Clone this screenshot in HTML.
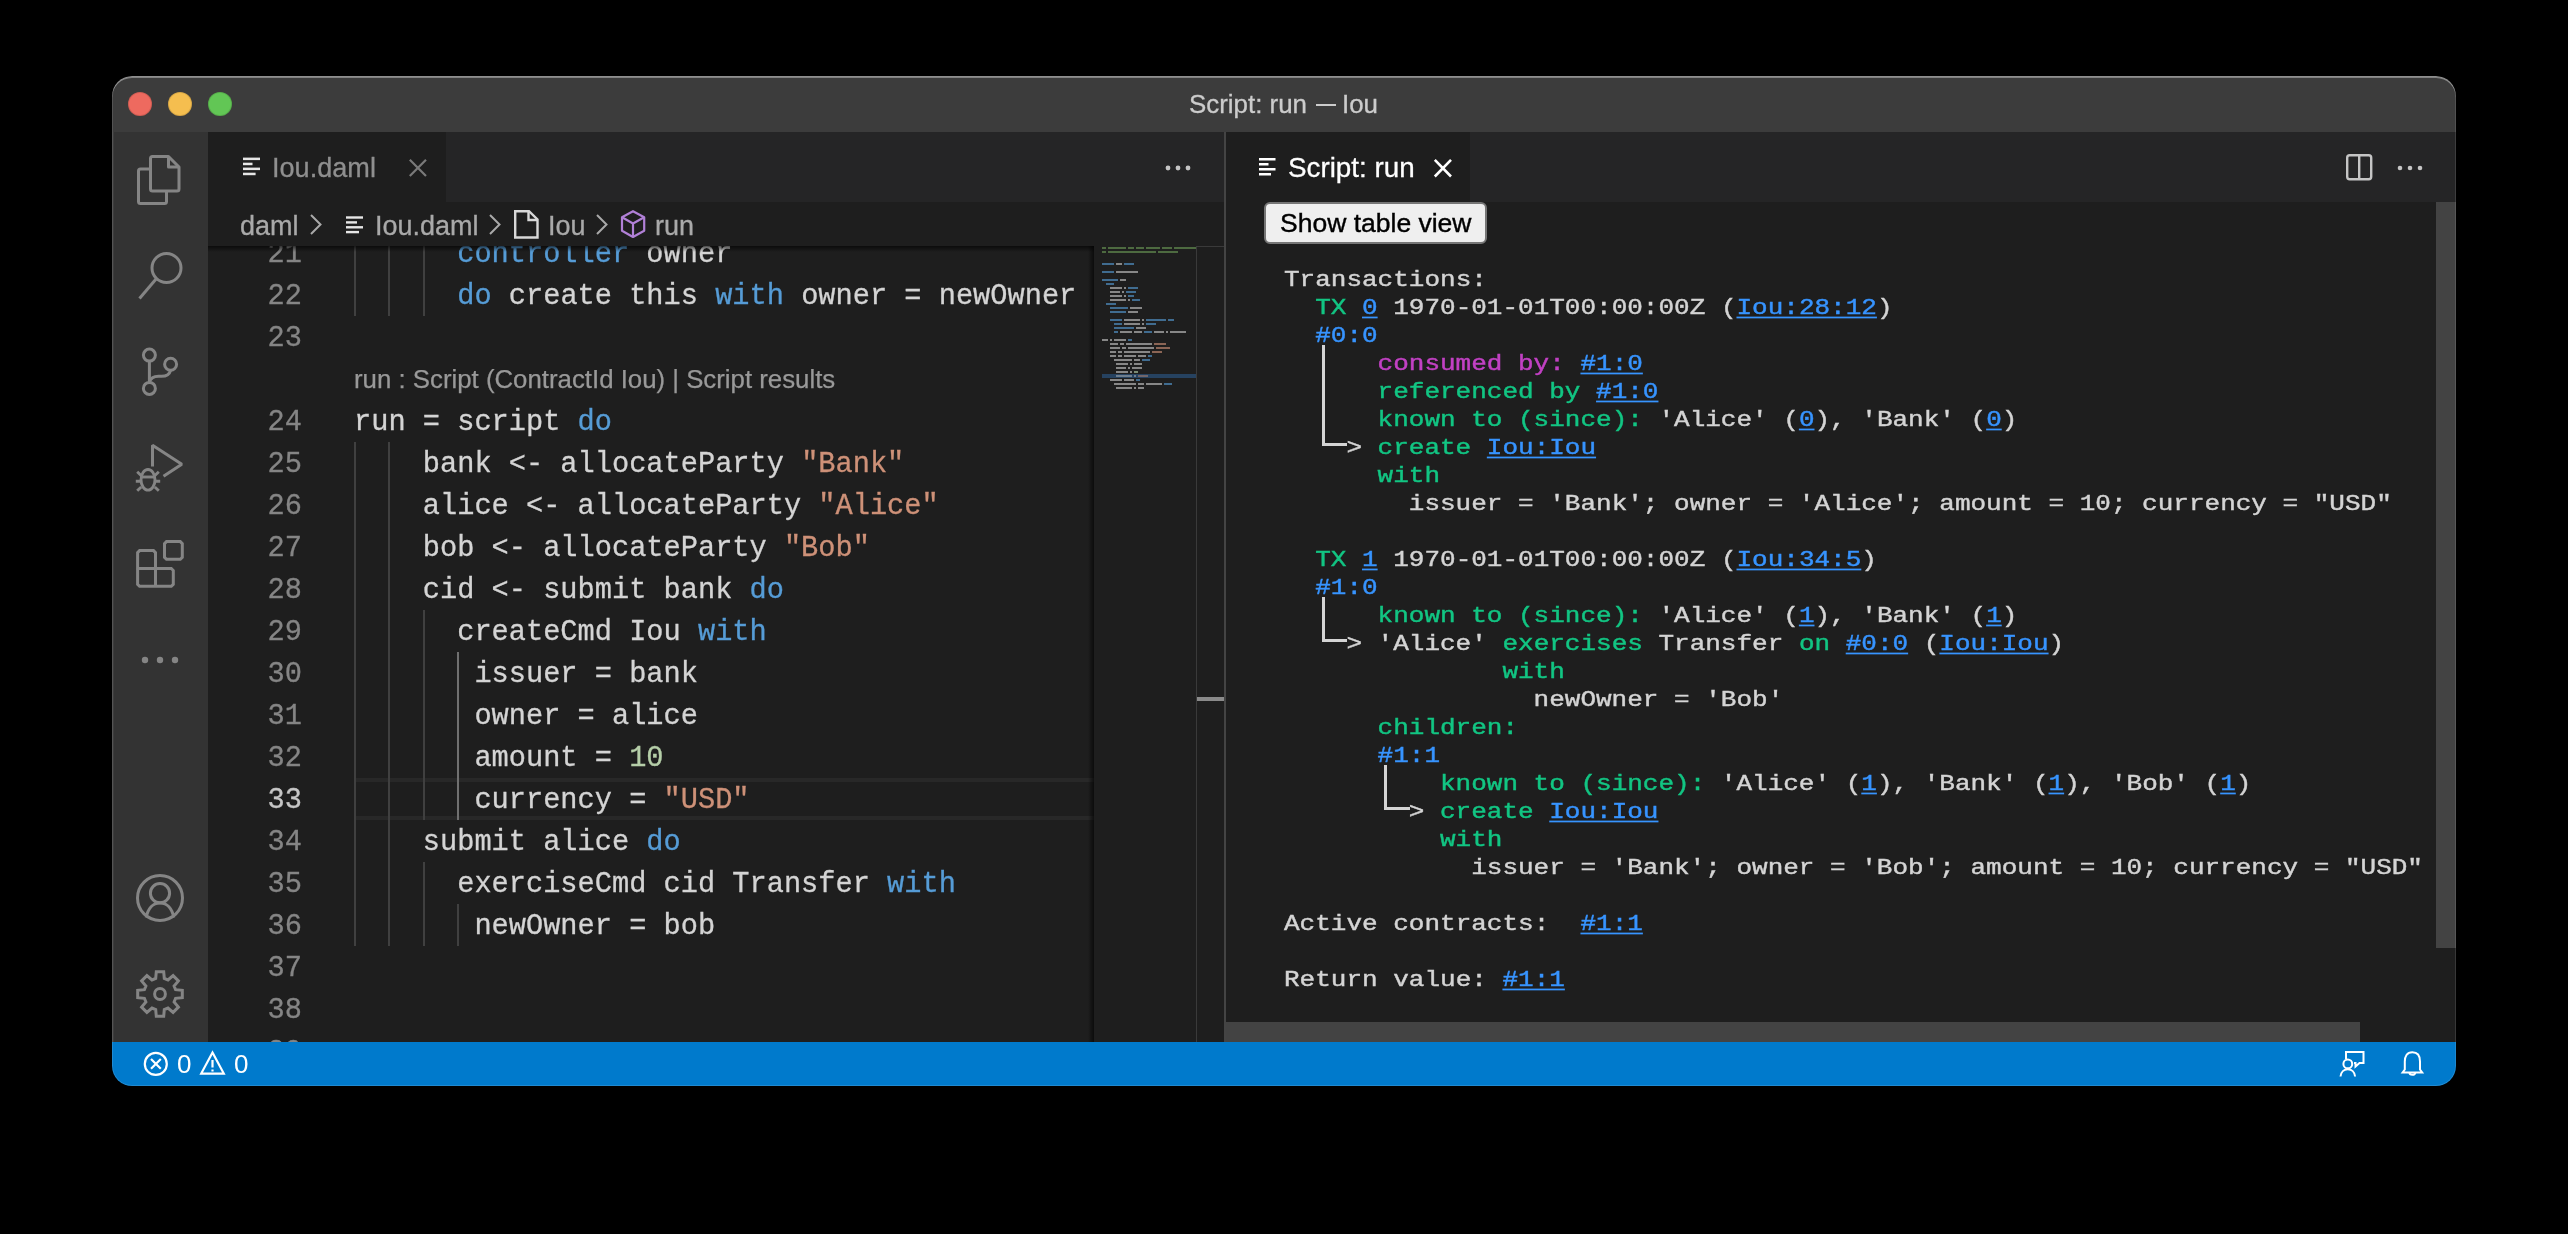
<!DOCTYPE html>
<html><head><meta charset="utf-8">
<style>
*{box-sizing:border-box;margin:0;padding:0}
html,body{width:2568px;height:1234px;background:#000;overflow:hidden}
body{position:relative;font-family:"Liberation Sans",sans-serif}
.win{position:absolute;left:0;top:0;width:2568px;height:1234px;will-change:transform;clip-path:inset(76px 112px 148px 112px round 20px);background:#1e1e1e}
.a{position:absolute}
svg{position:absolute;overflow:visible}
.title{left:112px;top:76px;width:2344px;height:56px;background:#3c3c3c}
.tl{position:absolute;width:24px;height:24px;border-radius:50%;top:92px;box-shadow:inset 0 0 0 1px rgba(0,0,0,0.12)}
.ttext{left:112px;width:2344px;top:76px;height:56px;line-height:56px;text-align:center;color:#cccccc;font-size:25.2px;-webkit-text-stroke:0.3px currentColor}
.act{left:112px;top:132px;width:96px;height:910px;background:#333333}
.tabs{top:132px;height:70px;background:#252526}
.status{left:112px;top:1042px;width:2344px;height:44px;background:#007acc}
.code{font-family:"Liberation Mono",monospace;font-size:28.66px;line-height:42px;white-space:pre;color:#d4d4d4;-webkit-text-stroke:0.3px currentColor;transform:scaleY(1.05);transform-origin:0 28.6px}
.ln{font-family:"Liberation Mono",monospace;font-size:28.66px;line-height:42px;white-space:pre;color:#858585;text-align:right;width:100px;-webkit-text-stroke:0.3px currentColor;transform:scaleY(1.05);transform-origin:0 28.6px}
.k{color:#569cd6}.s{color:#ce9178}.n{color:#b5cea8}
.g{position:absolute;width:2px;background:#404040}
.res{font-family:"Liberation Mono",monospace;font-size:26px;line-height:28px;white-space:pre;color:#d4d4d4;-webkit-text-stroke:0.5px currentColor;transform:scaleY(0.87);transform-origin:0 21px}
.gr{color:#12c583}.bl{color:#3794ff}.mg{color:#c241c4}
.lk{color:#3794ff;text-decoration:underline;text-underline-offset:3px}
.lens{font-size:25.8px;line-height:42px;color:#999999;white-space:pre;-webkit-text-stroke:0.25px currentColor}
.cur{color:#c6c6c6}
.bc{top:204px;height:44px;line-height:44px;font-size:27px;color:#a9a9a9;white-space:pre;-webkit-text-stroke:0.3px currentColor}
.mm{font-family:"Liberation Mono",monospace;font-size:3.34px;line-height:4px;white-space:pre;color:#bbbbbb}
</style></head><body>
<div class="win">
  <div class="a title"></div>
  <div class="a ttext" style="left:1189px;width:auto;text-align:left;font-size:25.9px">Script: run</div>
  <div class="a" style="left:1316px;top:104px;width:20px;height:2.4px;background:#cccccc"></div>
  <div class="a ttext" style="left:1342px;width:auto;text-align:left;font-size:25.9px">Iou</div>
  <div class="tl" style="left:128px;background:#ee6a5f"></div>
  <div class="tl" style="left:168px;background:#f5be4f"></div>
  <div class="tl" style="left:208px;background:#62c655"></div>

  <!-- activity bar -->
  <div class="a act"></div>
  <div class="a" style="left:112px;top:132px;width:2px;height:910px;background:#3d3d3d"></div>
  <svg style="left:112px;top:132px" width="96" height="910" viewBox="0 0 96 910" fill="none" stroke="#858585" stroke-width="3">
    <!-- explorer -->
    <g stroke-linejoin="round">
      <path d="M40.5 24.5 H56.5 L67 35 V57 a2 2 0 0 1-2 2 H40.5 a2 2 0 0 1-2-2 V26.5 a2 2 0 0 1 2-2 Z"/>
      <path d="M56.5 24.5 V35 H67"/>
      <path d="M38.5 37 H28.5 a2 2 0 0 0-2 2 V69.5 a2 2 0 0 0 2 2 H52.5 a2 2 0 0 0 2-2 V59"/>
    </g>
    <!-- search -->
    <circle cx="54.5" cy="136" r="14.5"/>
    <path d="M44.5 146.5 L27.5 166.5" stroke-linecap="butt"/>
    <!-- scm -->
    <circle cx="37.4" cy="223.1" r="6"/>
    <circle cx="58.6" cy="232.3" r="6"/>
    <circle cx="37.4" cy="256.4" r="6"/>
    <path d="M37.4 229 V250.5"/>
    <path d="M58.6 238.3 C57.5 242.5 54.5 244.3 49.5 244.3 H46.5 C41.5 244.3 38.5 246.5 37.4 250.5"/>
    <!-- run & debug -->
    <path d="M40.5 334.5 V313.2 L69.8 332.2 L51.5 344.2" stroke-linejoin="bevel"/>
    <g stroke-width="2.9">
      <ellipse cx="36" cy="347.8" rx="7" ry="10.3"/>
      <path d="M29 345 H43"/>
      <path d="M23.8 349.2 H29 M43 349.2 H48.2"/>
      <path d="M25.2 339.8 L29.6 344 M46.8 339.8 L42.4 344"/>
      <path d="M25.2 358.8 L29.2 355 M46.8 358.8 L42.8 355"/>
    </g>
    <!-- extensions -->
    <g stroke-linejoin="miter">
      <path d="M27.6 418.6 H41.5 L43.5 420.6 V436.5 H59.3 L61.3 438.5 V452.3 L59.3 454.3 H27.6 L25.6 452.3 V420.6 Z"/>
      <path d="M25.6 436.5 H43.5 V454.3"/>
      <path d="M54.5 409.6 H68.3 L70.3 411.6 V425.3 L68.3 427.3 H54.5 L52.5 425.3 V411.6 Z"/>
    </g>
    <!-- more -->
    <g fill="#858585" stroke="none">
      <circle cx="33" cy="528" r="3.2"/><circle cx="48" cy="528" r="3.2"/><circle cx="63" cy="528" r="3.2"/>
    </g>
    <!-- accounts -->
    <circle cx="48" cy="766" r="22.5"/>
    <circle cx="48" cy="761.2" r="9.6"/>
    <path d="M34.2 785.5 C36 776.5 41 771 48 771 C55 771 60 776.5 61.8 785.5"/>
    <!-- gear -->
    <path stroke-linejoin="miter" d="M43.7 846.4 L44.3 839.7 L51.7 839.7 L52.3 846.4 L56.0 847.9 L61.1 843.6 L66.4 848.9 L62.1 854.0 L63.6 857.7 L70.3 858.3 L70.3 865.7 L63.6 866.3 L62.1 870.0 L66.4 875.1 L61.1 880.4 L56.0 876.1 L52.3 877.6 L51.7 884.3 L44.3 884.3 L43.7 877.6 L40.0 876.1 L34.9 880.4 L29.6 875.1 L33.9 870.0 L32.4 866.3 L25.7 865.7 L25.7 858.3 L32.4 857.7 L33.9 854.0 L29.6 848.9 L34.9 843.6 L40.0 847.9 Z"/>
    <circle cx="48" cy="862" r="5.4"/>
  </svg>

  <!-- left group tabs -->
  <div class="a tabs" style="left:208px;width:1016px"></div>
  <div class="a" style="left:208px;top:132px;width:238px;height:70px;background:#1e1e1e"></div>
  <svg style="left:243px;top:157px" width="18" height="19" fill="#e6e6e6">
    <rect x="0" y="0.6" width="17" height="2.5"/><rect x="0" y="5.7" width="9.5" height="2.5"/>
    <rect x="0" y="10.6" width="17" height="2.5"/><rect x="0" y="15.7" width="12.6" height="2.5"/>
  </svg>
  <div class="a" style="left:272px;top:133px;height:70px;line-height:70px;font-size:27.1px;color:#8f8f8f;white-space:pre;-webkit-text-stroke:0.3px currentColor">Iou.daml</div>
  <svg style="left:409px;top:159px" width="18" height="18" stroke="#7a7a7a" stroke-width="2.2"><path d="M0.8 0.8 L17 17 M17 0.8 L0.8 17"/></svg>
  <svg style="left:1164px;top:164px" width="28" height="8" fill="#c5c5c5">
    <circle cx="4" cy="4" r="2.4"/><circle cx="14" cy="4" r="2.4"/><circle cx="24" cy="4" r="2.4"/>
  </svg>

  <!-- breadcrumbs -->
  <div class="a bc" style="left:240px">daml</div>
  <svg style="left:310px;top:214px" width="12" height="21" fill="none" stroke="#a9a9a9" stroke-width="2"><path d="M1 1 L10.5 10.5 L1 20"/></svg>
  <svg style="left:346px;top:216px" width="18" height="18" fill="#e6e6e6">
    <rect x="0" y="0.3" width="17" height="2.4"/><rect x="0" y="5.2" width="11" height="2.4"/>
    <rect x="0" y="10.1" width="17" height="2.4"/><rect x="0" y="14.9" width="13" height="2.4"/>
  </svg>
  <div class="a bc" style="left:375px">Iou.daml</div>
  <svg style="left:489px;top:214px" width="12" height="21" fill="none" stroke="#a9a9a9" stroke-width="2"><path d="M1 1 L10.5 10.5 L1 20"/></svg>
  <svg style="left:514px;top:210px" width="25" height="29" fill="none" stroke="#d8d8d8" stroke-width="2.4" stroke-linejoin="miter">
    <path d="M1.2 1.2 H15 L23.5 9.5 V27.5 H1.2 Z"/><path d="M14.5 1.2 V10 H23.5"/>
  </svg>
  <div class="a bc" style="left:548px">Iou</div>
  <svg style="left:596px;top:214px" width="12" height="21" fill="none" stroke="#a9a9a9" stroke-width="2"><path d="M1 1 L10.5 10.5 L1 20"/></svg>
  <svg style="left:621px;top:210px" width="25" height="29" fill="none" stroke="#b180d7" stroke-width="2.2" stroke-linejoin="round">
    <path d="M12 1.2 L23.2 7.2 V20.8 L12 27 L1 20.8 V7.2 Z"/><path d="M1 7.2 L12 13.5 L23.2 7.2 M12 13.5 V27"/>
  </svg>
  <div class="a bc" style="left:655px">run</div>

  <!-- EDITOR -->
  <div class="a" style="left:208px;top:246px;width:886px;height:796px;overflow:hidden">
<div class="a" style="left:146px;top:532px;width:740px;height:42px;border-top:4px solid #282828;border-bottom:4px solid #282828;border-left:2px solid #282828"></div>
<div class="a ln" style="top:-12px;left:-6px">21</div>
<div class="a code" style="top:-12px;left:146px">      <span class="k">controller</span> owner</div>
<div class="g" style="top:-14px;left:146px;height:42px;background:#404040"></div>
<div class="g" style="top:-14px;left:180px;height:42px;background:#404040"></div>
<div class="g" style="top:-14px;left:215px;height:42px;background:#404040"></div>
<div class="a ln" style="top:30px;left:-6px">22</div>
<div class="a code" style="top:30px;left:146px">      <span class="k">do</span> create this <span class="k">with</span> owner = newOwner</div>
<div class="g" style="top:28px;left:146px;height:42px;background:#404040"></div>
<div class="g" style="top:28px;left:180px;height:42px;background:#404040"></div>
<div class="g" style="top:28px;left:215px;height:42px;background:#404040"></div>
<div class="a ln" style="top:72px;left:-6px">23</div>
<div class="a ln" style="top:156px;left:-6px">24</div>
<div class="a code" style="top:156px;left:146px">run = script <span class="k">do</span></div>
<div class="a ln" style="top:198px;left:-6px">25</div>
<div class="a code" style="top:198px;left:146px">    bank &lt;- allocateParty <span class="s">"Bank"</span></div>
<div class="g" style="top:196px;left:146px;height:42px;background:#404040"></div>
<div class="g" style="top:196px;left:180px;height:42px;background:#404040"></div>
<div class="a ln" style="top:240px;left:-6px">26</div>
<div class="a code" style="top:240px;left:146px">    alice &lt;- allocateParty <span class="s">"Alice"</span></div>
<div class="g" style="top:238px;left:146px;height:42px;background:#404040"></div>
<div class="g" style="top:238px;left:180px;height:42px;background:#404040"></div>
<div class="a ln" style="top:282px;left:-6px">27</div>
<div class="a code" style="top:282px;left:146px">    bob &lt;- allocateParty <span class="s">"Bob"</span></div>
<div class="g" style="top:280px;left:146px;height:42px;background:#404040"></div>
<div class="g" style="top:280px;left:180px;height:42px;background:#404040"></div>
<div class="a ln" style="top:324px;left:-6px">28</div>
<div class="a code" style="top:324px;left:146px">    cid &lt;- submit bank <span class="k">do</span></div>
<div class="g" style="top:322px;left:146px;height:42px;background:#404040"></div>
<div class="g" style="top:322px;left:180px;height:42px;background:#404040"></div>
<div class="a ln" style="top:366px;left:-6px">29</div>
<div class="a code" style="top:366px;left:146px">      createCmd Iou <span class="k">with</span></div>
<div class="g" style="top:364px;left:146px;height:42px;background:#404040"></div>
<div class="g" style="top:364px;left:180px;height:42px;background:#404040"></div>
<div class="g" style="top:364px;left:215px;height:42px;background:#404040"></div>
<div class="a ln" style="top:408px;left:-6px">30</div>
<div class="a code" style="top:408px;left:146px">       issuer = bank</div>
<div class="g" style="top:406px;left:146px;height:42px;background:#404040"></div>
<div class="g" style="top:406px;left:180px;height:42px;background:#404040"></div>
<div class="g" style="top:406px;left:215px;height:42px;background:#404040"></div>
<div class="g" style="top:406px;left:249px;height:42px;background:#707070"></div>
<div class="a ln" style="top:450px;left:-6px">31</div>
<div class="a code" style="top:450px;left:146px">       owner = alice</div>
<div class="g" style="top:448px;left:146px;height:42px;background:#404040"></div>
<div class="g" style="top:448px;left:180px;height:42px;background:#404040"></div>
<div class="g" style="top:448px;left:215px;height:42px;background:#404040"></div>
<div class="g" style="top:448px;left:249px;height:42px;background:#707070"></div>
<div class="a ln" style="top:492px;left:-6px">32</div>
<div class="a code" style="top:492px;left:146px">       amount = <span class="n">10</span></div>
<div class="g" style="top:490px;left:146px;height:42px;background:#404040"></div>
<div class="g" style="top:490px;left:180px;height:42px;background:#404040"></div>
<div class="g" style="top:490px;left:215px;height:42px;background:#404040"></div>
<div class="g" style="top:490px;left:249px;height:42px;background:#707070"></div>
<div class="a ln cur" style="top:534px;left:-6px">33</div>
<div class="a code" style="top:534px;left:146px">       currency = <span class="s">"USD"</span></div>
<div class="g" style="top:532px;left:146px;height:42px;background:#404040"></div>
<div class="g" style="top:532px;left:180px;height:42px;background:#404040"></div>
<div class="g" style="top:532px;left:215px;height:42px;background:#404040"></div>
<div class="g" style="top:532px;left:249px;height:42px;background:#707070"></div>
<div class="a ln" style="top:576px;left:-6px">34</div>
<div class="a code" style="top:576px;left:146px">    submit alice <span class="k">do</span></div>
<div class="g" style="top:574px;left:146px;height:42px;background:#404040"></div>
<div class="g" style="top:574px;left:180px;height:42px;background:#404040"></div>
<div class="a ln" style="top:618px;left:-6px">35</div>
<div class="a code" style="top:618px;left:146px">      exerciseCmd cid Transfer <span class="k">with</span></div>
<div class="g" style="top:616px;left:146px;height:42px;background:#404040"></div>
<div class="g" style="top:616px;left:180px;height:42px;background:#404040"></div>
<div class="g" style="top:616px;left:215px;height:42px;background:#404040"></div>
<div class="a ln" style="top:660px;left:-6px">36</div>
<div class="a code" style="top:660px;left:146px">       newOwner = bob</div>
<div class="g" style="top:658px;left:146px;height:42px;background:#404040"></div>
<div class="g" style="top:658px;left:180px;height:42px;background:#404040"></div>
<div class="g" style="top:658px;left:215px;height:42px;background:#404040"></div>
<div class="g" style="top:658px;left:249px;height:42px;background:#404040"></div>
<div class="a ln" style="top:702px;left:-6px">37</div>
<div class="a ln" style="top:744px;left:-6px">38</div>
<div class="a ln" style="top:786px;left:-6px">39</div>
<div class="a lens" style="top:112px;left:146px">run : Script (ContractId Iou) | Script results</div>
<div class="a" style="left:0;top:0;width:886px;height:6px;background:linear-gradient(#000000a0,#00000000)"></div>
</div>

  <!-- minimap -->
  <div class="a" style="left:1094px;top:246px;width:102px;height:796px;overflow:hidden;background:#1e1e1e">
<div class="a" style="left:8px;top:128px;width:100px;height:4px;background:#264260"></div>
<div class="a" style="left:8px;top:1px;width:4px;height:2px;background:#6a9955;opacity:0.62"></div>
<div class="a" style="left:14px;top:1px;width:18px;height:2px;background:#6a9955;opacity:0.62"></div>
<div class="a" style="left:34px;top:1px;width:6px;height:2px;background:#6a9955;opacity:0.62"></div>
<div class="a" style="left:42px;top:1px;width:8px;height:2px;background:#6a9955;opacity:0.62"></div>
<div class="a" style="left:52px;top:1px;width:14px;height:2px;background:#6a9955;opacity:0.62"></div>
<div class="a" style="left:68px;top:1px;width:10px;height:2px;background:#6a9955;opacity:0.62"></div>
<div class="a" style="left:80px;top:1px;width:26px;height:2px;background:#6a9955;opacity:0.62"></div>
<div class="a" style="left:108px;top:1px;width:8px;height:2px;background:#6a9955;opacity:0.62"></div>
<div class="a" style="left:118px;top:1px;width:12px;height:2px;background:#6a9955;opacity:0.62"></div>
<div class="a" style="left:132px;top:1px;width:6px;height:2px;background:#6a9955;opacity:0.62"></div>
<div class="a" style="left:140px;top:1px;width:22px;height:2px;background:#6a9955;opacity:0.62"></div>
<div class="a" style="left:8px;top:5px;width:4px;height:2px;background:#6a9955;opacity:0.62"></div>
<div class="a" style="left:14px;top:5px;width:48px;height:2px;background:#6a9955;opacity:0.62"></div>
<div class="a" style="left:64px;top:5px;width:20px;height:2px;background:#6a9955;opacity:0.62"></div>
<div class="a" style="left:8px;top:17px;width:12px;height:2px;background:#569cd6;opacity:0.62"></div>
<div class="a" style="left:22px;top:17px;width:6px;height:2px;background:#c8c8c8;opacity:0.62"></div>
<div class="a" style="left:30px;top:17px;width:10px;height:2px;background:#569cd6;opacity:0.62"></div>
<div class="a" style="left:8px;top:25px;width:12px;height:2px;background:#569cd6;opacity:0.62"></div>
<div class="a" style="left:22px;top:25px;width:22px;height:2px;background:#c8c8c8;opacity:0.62"></div>
<div class="a" style="left:8px;top:33px;width:16px;height:2px;background:#569cd6;opacity:0.62"></div>
<div class="a" style="left:26px;top:33px;width:6px;height:2px;background:#c8c8c8;opacity:0.62"></div>
<div class="a" style="left:12px;top:37px;width:8px;height:2px;background:#569cd6;opacity:0.62"></div>
<div class="a" style="left:16px;top:41px;width:12px;height:2px;background:#c8c8c8;opacity:0.62"></div>
<div class="a" style="left:30px;top:41px;width:2px;height:2px;background:#c8c8c8;opacity:0.62"></div>
<div class="a" style="left:34px;top:41px;width:10px;height:2px;background:#569cd6;opacity:0.62"></div>
<div class="a" style="left:16px;top:45px;width:10px;height:2px;background:#c8c8c8;opacity:0.62"></div>
<div class="a" style="left:28px;top:45px;width:2px;height:2px;background:#c8c8c8;opacity:0.62"></div>
<div class="a" style="left:32px;top:45px;width:10px;height:2px;background:#569cd6;opacity:0.62"></div>
<div class="a" style="left:16px;top:49px;width:12px;height:2px;background:#c8c8c8;opacity:0.62"></div>
<div class="a" style="left:30px;top:49px;width:2px;height:2px;background:#c8c8c8;opacity:0.62"></div>
<div class="a" style="left:34px;top:49px;width:6px;height:2px;background:#569cd6;opacity:0.62"></div>
<div class="a" style="left:16px;top:53px;width:16px;height:2px;background:#c8c8c8;opacity:0.62"></div>
<div class="a" style="left:34px;top:53px;width:2px;height:2px;background:#c8c8c8;opacity:0.62"></div>
<div class="a" style="left:38px;top:53px;width:8px;height:2px;background:#569cd6;opacity:0.62"></div>
<div class="a" style="left:12px;top:57px;width:10px;height:2px;background:#569cd6;opacity:0.62"></div>
<div class="a" style="left:16px;top:61px;width:18px;height:2px;background:#569cd6;opacity:0.62"></div>
<div class="a" style="left:36px;top:61px;width:12px;height:2px;background:#c8c8c8;opacity:0.62"></div>
<div class="a" style="left:16px;top:65px;width:16px;height:2px;background:#569cd6;opacity:0.62"></div>
<div class="a" style="left:34px;top:65px;width:10px;height:2px;background:#c8c8c8;opacity:0.62"></div>
<div class="a" style="left:16px;top:73px;width:12px;height:2px;background:#569cd6;opacity:0.62"></div>
<div class="a" style="left:30px;top:73px;width:16px;height:2px;background:#c8c8c8;opacity:0.62"></div>
<div class="a" style="left:48px;top:73px;width:2px;height:2px;background:#c8c8c8;opacity:0.62"></div>
<div class="a" style="left:52px;top:73px;width:20px;height:2px;background:#569cd6;opacity:0.62"></div>
<div class="a" style="left:74px;top:73px;width:6px;height:2px;background:#569cd6;opacity:0.62"></div>
<div class="a" style="left:20px;top:77px;width:8px;height:2px;background:#569cd6;opacity:0.62"></div>
<div class="a" style="left:30px;top:77px;width:16px;height:2px;background:#c8c8c8;opacity:0.62"></div>
<div class="a" style="left:48px;top:77px;width:2px;height:2px;background:#c8c8c8;opacity:0.62"></div>
<div class="a" style="left:52px;top:77px;width:10px;height:2px;background:#569cd6;opacity:0.62"></div>
<div class="a" style="left:20px;top:81px;width:20px;height:2px;background:#569cd6;opacity:0.62"></div>
<div class="a" style="left:42px;top:81px;width:10px;height:2px;background:#c8c8c8;opacity:0.62"></div>
<div class="a" style="left:20px;top:85px;width:4px;height:2px;background:#569cd6;opacity:0.62"></div>
<div class="a" style="left:26px;top:85px;width:12px;height:2px;background:#c8c8c8;opacity:0.62"></div>
<div class="a" style="left:40px;top:85px;width:8px;height:2px;background:#c8c8c8;opacity:0.62"></div>
<div class="a" style="left:50px;top:85px;width:8px;height:2px;background:#569cd6;opacity:0.62"></div>
<div class="a" style="left:60px;top:85px;width:10px;height:2px;background:#c8c8c8;opacity:0.62"></div>
<div class="a" style="left:72px;top:85px;width:2px;height:2px;background:#c8c8c8;opacity:0.62"></div>
<div class="a" style="left:76px;top:85px;width:16px;height:2px;background:#c8c8c8;opacity:0.62"></div>
<div class="a" style="left:8px;top:93px;width:6px;height:2px;background:#c8c8c8;opacity:0.62"></div>
<div class="a" style="left:16px;top:93px;width:2px;height:2px;background:#c8c8c8;opacity:0.62"></div>
<div class="a" style="left:20px;top:93px;width:12px;height:2px;background:#c8c8c8;opacity:0.62"></div>
<div class="a" style="left:34px;top:93px;width:4px;height:2px;background:#569cd6;opacity:0.62"></div>
<div class="a" style="left:16px;top:97px;width:8px;height:2px;background:#c8c8c8;opacity:0.62"></div>
<div class="a" style="left:26px;top:97px;width:4px;height:2px;background:#c8c8c8;opacity:0.62"></div>
<div class="a" style="left:32px;top:97px;width:26px;height:2px;background:#c8c8c8;opacity:0.62"></div>
<div class="a" style="left:60px;top:97px;width:12px;height:2px;background:#ce9178;opacity:0.62"></div>
<div class="a" style="left:16px;top:101px;width:10px;height:2px;background:#c8c8c8;opacity:0.62"></div>
<div class="a" style="left:28px;top:101px;width:4px;height:2px;background:#c8c8c8;opacity:0.62"></div>
<div class="a" style="left:34px;top:101px;width:26px;height:2px;background:#c8c8c8;opacity:0.62"></div>
<div class="a" style="left:62px;top:101px;width:14px;height:2px;background:#ce9178;opacity:0.62"></div>
<div class="a" style="left:16px;top:105px;width:6px;height:2px;background:#c8c8c8;opacity:0.62"></div>
<div class="a" style="left:24px;top:105px;width:4px;height:2px;background:#c8c8c8;opacity:0.62"></div>
<div class="a" style="left:30px;top:105px;width:26px;height:2px;background:#c8c8c8;opacity:0.62"></div>
<div class="a" style="left:58px;top:105px;width:10px;height:2px;background:#ce9178;opacity:0.62"></div>
<div class="a" style="left:16px;top:109px;width:6px;height:2px;background:#c8c8c8;opacity:0.62"></div>
<div class="a" style="left:24px;top:109px;width:4px;height:2px;background:#c8c8c8;opacity:0.62"></div>
<div class="a" style="left:30px;top:109px;width:12px;height:2px;background:#c8c8c8;opacity:0.62"></div>
<div class="a" style="left:44px;top:109px;width:8px;height:2px;background:#c8c8c8;opacity:0.62"></div>
<div class="a" style="left:54px;top:109px;width:4px;height:2px;background:#569cd6;opacity:0.62"></div>
<div class="a" style="left:20px;top:113px;width:18px;height:2px;background:#c8c8c8;opacity:0.62"></div>
<div class="a" style="left:40px;top:113px;width:6px;height:2px;background:#c8c8c8;opacity:0.62"></div>
<div class="a" style="left:48px;top:113px;width:8px;height:2px;background:#569cd6;opacity:0.62"></div>
<div class="a" style="left:22px;top:117px;width:12px;height:2px;background:#c8c8c8;opacity:0.62"></div>
<div class="a" style="left:36px;top:117px;width:2px;height:2px;background:#c8c8c8;opacity:0.62"></div>
<div class="a" style="left:40px;top:117px;width:8px;height:2px;background:#c8c8c8;opacity:0.62"></div>
<div class="a" style="left:22px;top:121px;width:10px;height:2px;background:#c8c8c8;opacity:0.62"></div>
<div class="a" style="left:34px;top:121px;width:2px;height:2px;background:#c8c8c8;opacity:0.62"></div>
<div class="a" style="left:38px;top:121px;width:10px;height:2px;background:#c8c8c8;opacity:0.62"></div>
<div class="a" style="left:22px;top:125px;width:12px;height:2px;background:#c8c8c8;opacity:0.62"></div>
<div class="a" style="left:36px;top:125px;width:2px;height:2px;background:#c8c8c8;opacity:0.62"></div>
<div class="a" style="left:40px;top:125px;width:4px;height:2px;background:#b5cea8;opacity:0.62"></div>
<div class="a" style="left:22px;top:129px;width:16px;height:2px;background:#c8c8c8;opacity:0.45"></div>
<div class="a" style="left:40px;top:129px;width:2px;height:2px;background:#c8c8c8;opacity:0.45"></div>
<div class="a" style="left:44px;top:129px;width:10px;height:2px;background:#ce9178;opacity:0.45"></div>
<div class="a" style="left:16px;top:133px;width:12px;height:2px;background:#c8c8c8;opacity:0.62"></div>
<div class="a" style="left:30px;top:133px;width:10px;height:2px;background:#c8c8c8;opacity:0.62"></div>
<div class="a" style="left:42px;top:133px;width:4px;height:2px;background:#569cd6;opacity:0.62"></div>
<div class="a" style="left:20px;top:137px;width:22px;height:2px;background:#c8c8c8;opacity:0.62"></div>
<div class="a" style="left:44px;top:137px;width:6px;height:2px;background:#c8c8c8;opacity:0.62"></div>
<div class="a" style="left:52px;top:137px;width:16px;height:2px;background:#c8c8c8;opacity:0.62"></div>
<div class="a" style="left:70px;top:137px;width:8px;height:2px;background:#569cd6;opacity:0.62"></div>
<div class="a" style="left:22px;top:141px;width:16px;height:2px;background:#c8c8c8;opacity:0.62"></div>
<div class="a" style="left:40px;top:141px;width:2px;height:2px;background:#c8c8c8;opacity:0.62"></div>
<div class="a" style="left:44px;top:141px;width:6px;height:2px;background:#c8c8c8;opacity:0.62"></div>
</div>
<div class="a" style="left:1088px;top:246px;width:6px;height:796px;background:linear-gradient(90deg,#00000000,#000000a0)"></div>
<div class="a" style="left:1196px;top:246px;width:28px;height:1px;background:#3a3a3a"></div>
<div class="a" style="left:1196px;top:246px;width:1px;height:796px;background:#3a3a3a"></div>
<div class="a" style="left:1197px;top:697px;width:27px;height:4px;background:#8a8a8a"></div>

  <!-- divider -->
  <div class="a" style="left:1224px;top:132px;width:2px;height:910px;background:#444444"></div>

  <!-- right group tabs -->
  <div class="a tabs" style="left:1226px;width:1230px"></div>
  <div class="a" style="left:1226px;top:132px;width:244px;height:70px;background:#1e1e1e"></div>
  <svg style="left:1259px;top:157px" width="18" height="19" fill="#ffffff">
    <rect x="0" y="1" width="16.5" height="2.5"/><rect x="0" y="6" width="9.5" height="2.5"/>
    <rect x="0" y="11" width="16.5" height="2.5"/><rect x="0" y="16" width="12" height="2.5"/>
  </svg>
  <div class="a" style="left:1288px;top:133px;height:70px;line-height:70px;font-size:27.8px;color:#ffffff;white-space:pre;-webkit-text-stroke:0.3px currentColor">Script: run</div>
  <svg style="left:1434px;top:159px" width="18" height="19" stroke="#ffffff" stroke-width="2.6"><path d="M0.8 0.8 L17 17.5 M17 0.8 L0.8 17.5"/></svg>
  <svg style="left:2346px;top:154px" width="27" height="27" fill="none" stroke="#c5c5c5" stroke-width="2.4">
    <rect x="1.2" y="1.2" width="24" height="24" rx="2.5"/><path d="M13.2 1.2 V25.2"/>
  </svg>
  <svg style="left:2395px;top:164px" width="28" height="8" fill="#c5c5c5">
    <circle cx="5" cy="4" r="2.3"/><circle cx="15" cy="4" r="2.3"/><circle cx="25" cy="4" r="2.3"/>
  </svg>

  <!-- webview -->
  <div class="a" style="left:1264px;top:202px;width:223px;height:42px;background:#efefef;border:2px solid #767676;border-radius:6px"></div>
  <div class="a" style="left:1280px;top:203px;height:41px;line-height:41px;font-size:26.5px;color:#000;white-space:pre;-webkit-text-stroke:0.4px #000">Show table view</div>
  <div class="a res" style="top:265px;left:1284.0px">Transactions:</div>
<div class="a res" style="top:293px;left:1315.2px"><span class="gr">TX</span> <span class="lk">0</span> 1970-01-01T00:00:00Z (<span class="lk">Iou:28:12</span>)</div>
<div class="a res" style="top:321px;left:1315.2px"><span class="bl">#0:0</span></div>
<div class="a res" style="top:349px;left:1377.6px"><span class="mg">consumed by:</span> <span class="lk">#1:0</span></div>
<div class="a res" style="top:377px;left:1377.6px"><span class="gr">referenced by</span> <span class="lk">#1:0</span></div>
<div class="a res" style="top:405px;left:1377.6px"><span class="gr">known to (since):</span> 'Alice' (<span class="lk">0</span>), 'Bank' (<span class="lk">0</span>)</div>
<div class="a res" style="top:433px;left:1346.4px">&gt; <span class="gr">create</span> <span class="lk">Iou:Iou</span></div>
<div class="a res" style="top:461px;left:1377.6px"><span class="gr">with</span></div>
<div class="a res" style="top:489px;left:1408.8px">issuer = 'Bank'; owner = 'Alice'; amount = 10; currency = "USD"</div>
<div class="a res" style="top:545px;left:1315.2px"><span class="gr">TX</span> <span class="lk">1</span> 1970-01-01T00:00:00Z (<span class="lk">Iou:34:5</span>)</div>
<div class="a res" style="top:573px;left:1315.2px"><span class="bl">#1:0</span></div>
<div class="a res" style="top:601px;left:1377.6px"><span class="gr">known to (since):</span> 'Alice' (<span class="lk">1</span>), 'Bank' (<span class="lk">1</span>)</div>
<div class="a res" style="top:629px;left:1346.4px">&gt; 'Alice' <span class="gr">exercises</span> Transfer <span class="gr">on</span> <span class="lk">#0:0</span> (<span class="lk">Iou:Iou</span>)</div>
<div class="a res" style="top:657px;left:1502.4px"><span class="gr">with</span></div>
<div class="a res" style="top:685px;left:1533.6px">newOwner = 'Bob'</div>
<div class="a res" style="top:713px;left:1377.6px"><span class="gr">children:</span></div>
<div class="a res" style="top:741px;left:1377.6px"><span class="bl">#1:1</span></div>
<div class="a res" style="top:769px;left:1440.0px"><span class="gr">known to (since):</span> 'Alice' (<span class="lk">1</span>), 'Bank' (<span class="lk">1</span>), 'Bob' (<span class="lk">1</span>)</div>
<div class="a res" style="top:797px;left:1408.8px">&gt; <span class="gr">create</span> <span class="lk">Iou:Iou</span></div>
<div class="a res" style="top:825px;left:1440.0px"><span class="gr">with</span></div>
<div class="a res" style="top:853px;left:1471.2px">issuer = 'Bank'; owner = 'Bob'; amount = 10; currency = "USD"</div>
<div class="a res" style="top:909px;left:1284.0px">Active contracts:  <span class="lk">#1:1</span></div>
<div class="a res" style="top:965px;left:1284.0px">Return value: <span class="lk">#1:1</span></div>
<div class="a" style="left:1321.5px;top:345px;width:3px;height:101px;background:#d4d4d4"></div>
<div class="a" style="left:1321.5px;top:443px;width:25.7px;height:3px;background:#d4d4d4"></div>
<div class="a" style="left:1321.5px;top:597px;width:3px;height:45px;background:#d4d4d4"></div>
<div class="a" style="left:1321.5px;top:639px;width:25.7px;height:3px;background:#d4d4d4"></div>
<div class="a" style="left:1383.9px;top:765px;width:3px;height:45px;background:#d4d4d4"></div>
<div class="a" style="left:1383.9px;top:807px;width:25.7px;height:3px;background:#d4d4d4"></div>
  <div class="a" style="left:2436px;top:202px;width:20px;height:746px;background:#434343"></div>
  <div class="a" style="left:1226px;top:1022px;width:1134px;height:20px;background:#434343"></div>

  <!-- status bar -->
  <div class="a status"></div>
  <svg style="left:143px;top:1051px" width="26" height="26" fill="none" stroke="#ffffff" stroke-width="2.2">
    <circle cx="12.8" cy="12.9" r="11"/><path d="M8 8 L17.8 17.8 M17.8 8 L8 17.8"/>
  </svg>
  <div class="a" style="left:177px;top:1042px;height:44px;line-height:44px;font-size:26px;color:#fff">0</div>
  <svg style="left:200px;top:1051px" width="26" height="25" fill="none" stroke="#ffffff" stroke-width="2.2" stroke-linejoin="miter">
    <path d="M12.5 1.5 L23.8 22.6 H1.2 Z"/><path d="M12.5 9 V16.5 M12.5 18.4 V20.4"/>
  </svg>
  <div class="a" style="left:234px;top:1042px;height:44px;line-height:44px;font-size:26px;color:#fff">0</div>
  <svg style="left:2339px;top:1051px" width="27" height="27" fill="none" stroke="#ffffff" stroke-width="2">
    <path d="M7 8 V1 H24.5 V12 H20.5 L16.5 15.5 V12 H15"/>
    <circle cx="8.8" cy="12.9" r="4.4"/>
    <path d="M1.5 25.5 C2 21 5 18.3 8.8 18.3 C12.6 18.3 15.6 21 16.1 25.5"/>
  </svg>
  <svg style="left:2401px;top:1051px" width="23" height="26" fill="none" stroke="#ffffff" stroke-width="2">
    <path d="M11.4 1.2 C5.8 1.2 3.8 5.5 3.8 10.5 V18.5 L1.6 21.5 H21.2 L19 18.5 V10.5 C19 5.5 17 1.2 11.4 1.2 Z"/>
    <path d="M8.5 21.8 C8.5 24.5 14.3 24.5 14.3 21.8"/>
  </svg>
  <div class="a" style="left:112px;top:76px;width:2344px;height:1010px;border-radius:20px;box-shadow:inset 0 2px 0 rgba(255,255,255,0.35),inset 0 0 0 1px rgba(255,255,255,0.12);pointer-events:none"></div>
</div>
</body></html>
